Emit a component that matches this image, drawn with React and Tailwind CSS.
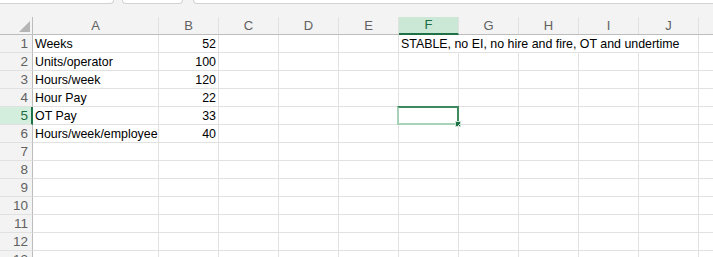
import React from 'react'

const cols = [
  { key: 'A', w: 'w-[126px]' },
  { key: 'B', w: 'w-[60px]' },
  { key: 'C', w: 'w-[60px]' },
  { key: 'D', w: 'w-[60px]' },
  { key: 'E', w: 'w-[60px]' },
  { key: 'F', w: 'w-[60px]' },
  { key: 'G', w: 'w-[60px]' },
  { key: 'H', w: 'w-[60px]' },
  { key: 'I', w: 'w-[60px]' },
  { key: 'J', w: 'w-[60px]' },
  { key: 'K', w: 'w-[60px]' },
]

const data = {
  1: { A: 'Weeks', B: '52', F: 'STABLE, no EI, no hire and fire, OT and undertime' },
  2: { A: 'Units/operator', B: '100' },
  3: { A: 'Hours/week', B: '120' },
  4: { A: 'Hour Pay', B: '22' },
  5: { A: 'OT Pay', B: '33' },
  6: { A: 'Hours/week/employee', B: '40' },
}

const rows = Array.from({ length: 13 }, (_, i) => i + 1)

function Cell({ row, col }) {
  const value = data[row]?.[col.key]
  const numeric = value && /^\d+$/.test(value)
  // text in F1 spills over G..J, so those gridlines are hidden
  const spill = row === 1 && ['F', 'G', 'H', 'I'].includes(col.key)
  const selected = row === 5 && col.key === 'F'
  return (
    <div
      className={`relative h-[18px] shrink-0 border-b border-[#e1e1e1] ${col.w} ${
        spill ? 'border-r border-r-transparent' : 'border-r border-r-[#e1e1e1]'
      }`}
    >
      {value ? (
        <div
          className={`absolute top-0 h-[17px] whitespace-nowrap text-[12.4px] leading-[18px] text-black ${
            numeric ? 'right-[2px]' : 'left-[2px]'
          }`}
        >
          {value}
        </div>
      ) : null}
      {selected ? (
        <>
          <div className="absolute -left-[2px] -top-[1px] h-[19px] w-[62px] border-2 border-t-[#3d8a5e] border-r-[#3d8a5e] border-b-[#a8d2b8] border-l-[#a8d2b8]" />
          <div className="absolute -bottom-[3px] -right-[3px] h-[6px] w-[6px] border border-[#c6e3d1] bg-[#1b7043]" />
        </>
      ) : null}
    </div>
  )
}

export default function App() {
  return (
    <div
      className="h-[257px] w-[713px] overflow-hidden bg-[#f3f3f3]"
      style={{ fontFamily: '"Liberation Sans", Arial, sans-serif' }}
    >
      {/* bottom edge of the ribbon boxes */}
      <div className="flex h-[17px] items-start">
        <div className="-ml-[4px] h-[4px] w-[120px] rounded-b-[6px] border-x border-b border-[#d2d2d2] bg-white" />
        <div className="ml-[8px] h-[4px] w-[63px] rounded-b-[6px] border-x border-b border-[#d2d2d2] bg-white" />
        <div className="ml-[10px] h-[4px] w-[530px] rounded-bl-[6px] border-l border-b border-[#d2d2d2] bg-white" />
      </div>

      {/* column headers */}
      <div className="flex h-[18px]">
        <div className="relative h-[18px] w-[33px] shrink-0 border-r border-b border-[#bdbdbd]">
          <svg className="absolute left-[19px] top-[4px]" width="12" height="12" viewBox="0 0 12 12">
            <polygon points="11,0 11,11 0,11" fill="#b5b5b5" />
          </svg>
        </div>
        {cols.map((c) =>
          c.key === 'F' ? (
            <div
              key={c.key}
              className={`flex h-[18px] shrink-0 items-center justify-center border-r border-b-2 border-r-[#e1e1e1] border-b-[#1e7145] bg-[#cae8d5] pb-[1px] text-[13px] text-[#1e6b41] ${c.w}`}
            >
              {c.key}
            </div>
          ) : (
            <div
              key={c.key}
              className={`flex h-[18px] shrink-0 items-center justify-center border-b border-b-[#bdbdbd] text-[13px] text-[#616161] ${c.w}`}
            >
              <div className="flex-1 text-center">{c.key}</div>
              <div className="h-[17px] w-px self-start bg-[#e1e1e1]" />
            </div>
          )
        )}
      </div>

      {/* rows */}
      {rows.map((r) => (
        <div key={r} className="flex h-[18px] bg-white">
          {r === 5 ? (
            <div className="h-[18px] w-[33px] shrink-0 border-r-2 border-b border-r-[#1e7145] border-b-[#e1e1e1] bg-[#d3eedd] pr-[3px] text-right text-[13.5px] leading-[17px] text-[#1e6b41]">
              {r}
            </div>
          ) : (
            <div className="h-[18px] w-[33px] shrink-0 border-r border-b border-r-[#bdbdbd] border-b-[#e1e1e1] bg-[#f3f3f3] pr-[4px] text-right text-[13.5px] leading-[17px] text-[#616161]">
              {r}
            </div>
          )}
          {cols.map((c) => (
            <Cell key={c.key} row={r} col={c} />
          ))}
        </div>
      ))}
    </div>
  )
}
